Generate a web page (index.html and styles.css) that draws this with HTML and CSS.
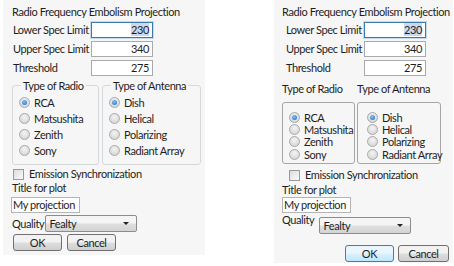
FILE: index.html
```html
<!DOCTYPE html>
<html>
<head>
  <title>Radio Frequency Embolism Projection</title>
  <link rel="stylesheet" href="styles.css">
</head>
<body>
  <div class="page">
    <!-- grouped version -->
    <div class="dialog left">
      <div class="title">Radio Frequency Embolism Projection</div>
      <div class="specs">
        <span class="lbl">Lower Spec Limit</span><span class="num focus"><span class="sel">230</span></span>
        <span class="lbl">Upper Spec Limit</span><span class="num">340</span>
        <span class="lbl">Threshold</span><span class="num">275</span>
      </div>
      <div class="groups">
        <div class="group">
          <div class="legend">Type of Radio</div>
          <div class="radio"><span class="dot on"></span>RCA</div>
          <div class="radio"><span class="dot"></span>Matsushita</div>
          <div class="radio"><span class="dot"></span>Zenith</div>
          <div class="radio"><span class="dot"></span>Sony</div>
        </div>
        <div class="group">
          <div class="legend">Type of Antenna</div>
          <div class="radio"><span class="dot on"></span>Dish</div>
          <div class="radio"><span class="dot"></span>Helical</div>
          <div class="radio"><span class="dot"></span>Polarizing</div>
          <div class="radio"><span class="dot"></span>Radiant Array</div>
        </div>
      </div>
      <div class="check"><span class="box"></span>Emission Synchronization</div>
      <div class="plot-lbl">Title for plot</div>
      <div class="text">My projection</div>
      <div class="quality">
        <span>Quality</span>
        <span class="select">Fealty<span class="arrow"></span></span>
      </div>
      <div class="buttons">
        <span class="btn">OK</span>
        <span class="btn">Cancel</span>
      </div>
    </div>

    <!-- plain version -->
    <div class="dialog right">
      <div class="title">Radio Frequency Embolism Projection</div>
      <div class="specs">
        <span class="lbl">Lower Spec Limit</span><span class="num focus"><span class="sel">230</span></span>
        <span class="lbl">Upper Spec Limit</span><span class="num">340</span>
        <span class="lbl">Threshold</span><span class="num">275</span>
      </div>
      <div class="groups">
        <div class="col">
          <div class="head">Type of Radio</div>
          <div class="panel">
            <div class="radio"><span class="dot on"></span>RCA</div>
            <div class="radio"><span class="dot"></span>Matsushita</div>
            <div class="radio"><span class="dot"></span>Zenith</div>
            <div class="radio"><span class="dot"></span>Sony</div>
          </div>
        </div>
        <div class="col">
          <div class="head">Type of Antenna</div>
          <div class="panel">
            <div class="radio"><span class="dot on"></span>Dish</div>
            <div class="radio"><span class="dot"></span>Helical</div>
            <div class="radio"><span class="dot"></span>Polarizing</div>
            <div class="radio"><span class="dot"></span>Radiant Array</div>
          </div>
        </div>
      </div>
      <div class="check"><span class="box"></span>Emission Synchronization</div>
      <div class="plot-lbl">Title for plot</div>
      <div class="text">My projection</div>
      <div class="quality">
        <span>Quality</span>
        <span class="select">Fealty<span class="arrow"></span></span>
      </div>
      <div class="buttons">
        <span class="btn default">OK</span>
        <span class="btn cancel">Cancel</span>
      </div>
    </div>
  </div>
</body>
</html>
```

FILE: styles.css
```css
body {
  margin: 0;
  background-color: #ffffff;
  font-family: Lato, "Noto Sans", sans-serif;
  font-size: 11px;
  letter-spacing: -0.4px;
  color: #1e1e1e;
  white-space: nowrap;
}

.page {
  display: flex;
  align-items: flex-start;
}

.dialog {
  background-color: #f6f6f6;
  box-sizing: border-box;
  overflow: hidden;
}

.left {
  margin-left: 3px;
  width: 202px;
  height: 255px;
  padding: 4px 0 0 9px;
}

.right {
  margin-left: 69px;
  width: 179px;
  height: 263px;
  padding: 4px 0 0 8px;
}

.title {
  line-height: 16px;
}

.specs {
  display: grid;
  grid-template-columns: 78px 62px;
  grid-auto-rows: 16px;
  row-gap: 3px;
  align-items: center;
  margin: 2px 0 0 1px;
}

.right .specs {
  margin-left: 4px;
}

.lbl {
  line-height: 16px;
}

.num {
  height: 16px;
  line-height: 14px;
  border: 1px solid #a9a9a9;
  background-color: #ffffff;
  text-align: right;
  padding-right: 3px;
  box-sizing: border-box;
}

.num.focus {
  border-color: #3d7bad;
  box-shadow: 0 0 0 1px #c4dbef;
}

.sel {
  background-color: #c9daf0;
}

.groups {
  display: flex;
  gap: 3px;
  margin-top: 9px;
}

.left .groups {
  margin-left: -0px;
}

.group {
  border: 1px solid #d5d9dc;
  border-radius: 3px;
  padding: 9px 0 0 6px;
  box-sizing: border-box;
  height: 80px;
}

.left .group:first-child {
  width: 87px;
}

.left .group:last-child {
  width: 99px;
}

.legend {
  margin: -17px 0 0 2px;
  padding: 0 2px;
  background-color: #f6f6f6;
  width: fit-content;
  line-height: 16px;
}

.radio {
  display: flex;
  align-items: center;
  gap: 4px;
  height: 16px;
}

.dot {
  width: 11px;
  height: 11px;
  border-radius: 50%;
  border: 1px solid #a9a9a9;
  background: radial-gradient(circle at 50% 35%, #f4f4f4, #cfcfcf);
  box-sizing: border-box;
  display: flex;
  align-items: center;
  justify-content: center;
  flex-shrink: 0;
}

.dot.on::after {
  content: "";
  width: 5px;
  height: 5px;
  border-radius: 50%;
  background: radial-gradient(circle at 40% 35%, #7ec1f2, #1f6cc0);
}

.check {
  display: flex;
  align-items: center;
  gap: 5px;
  margin: 2px 0 0 1px;
  line-height: 14px;
}

.box {
  width: 11px;
  height: 11px;
  border: 1px solid #9a9a9a;
  background: linear-gradient(135deg, #dcdcdc, #fafafa);
  box-sizing: border-box;
}

.plot-lbl {
  line-height: 14px;
}

.text {
  width: 69px;
  height: 16px;
  line-height: 14px;
  border: 1px solid #b5b5b5;
  background-color: #ffffff;
  box-sizing: border-box;
  padding-left: 1px;
  margin: 2px 0 0 -1px;
}

.quality {
  display: flex;
  align-items: center;
  gap: 1px;
  margin-top: 2px;
  line-height: 14px;
}

.select {
  display: flex;
  justify-content: space-between;
  align-items: center;
  width: 92px;
  height: 17px;
  border: 1px solid #8c8c8c;
  border-radius: 2px;
  background: linear-gradient(#f5f5f5 45%, #dedede 55%, #d4d4d4);
  box-sizing: border-box;
  padding: 0 7px 0 3px;
}

.arrow {
  width: 0;
  height: 0;
  border-left: 3px solid transparent;
  border-right: 3px solid transparent;
  border-top: 3px solid #222;
}

.buttons {
  display: flex;
  gap: 5px;
  margin: 2px 0 0 1px;
}

.btn {
  width: 49px;
  height: 17px;
  line-height: 15px;
  text-align: center;
  border: 1px solid #707070;
  border-radius: 3px;
  background: linear-gradient(#f2f2f2 45%, #dddddd 55%, #cfcfcf);
  box-sizing: border-box;
}

/* right dialog: headings above plain boxes */
.right .groups {
  margin-top: 5px;
  gap: 2px;
}

.head {
  line-height: 16px;
  margin-bottom: 5px;
}

.panel {
  border: 1px solid #a6a6a6;
  border-radius: 3px;
  padding: 8px 0 0 6px;
  height: 62px;
  box-sizing: border-box;
}

.right .col:first-child .panel {
  width: 73px;
}

.right .col:last-child .panel {
  width: 84px;
  padding-left: 9px;
}

.right .radio {
  height: 12.3px;
}

.right .check {
  margin: 4px 0 0 7px;
}

.right .plot-lbl {
  margin-top: 1px;
}

.right .text {
  margin: 0;
}

.right .quality {
  align-items: flex-start;
  gap: 5px;
  margin-top: 0;
}

.right .select {
  margin-top: 4px;
}

.right .buttons {
  justify-content: flex-end;
  gap: 4px;
  margin: 11px 4px 0 0;
}

.btn.default {
  border-color: #3c7fb1;
  background: linear-gradient(#eaf6fd 45%, #d9f0fc 55%, #bee6fd);
}

.btn.cancel {
  width: 51px;
}
```
